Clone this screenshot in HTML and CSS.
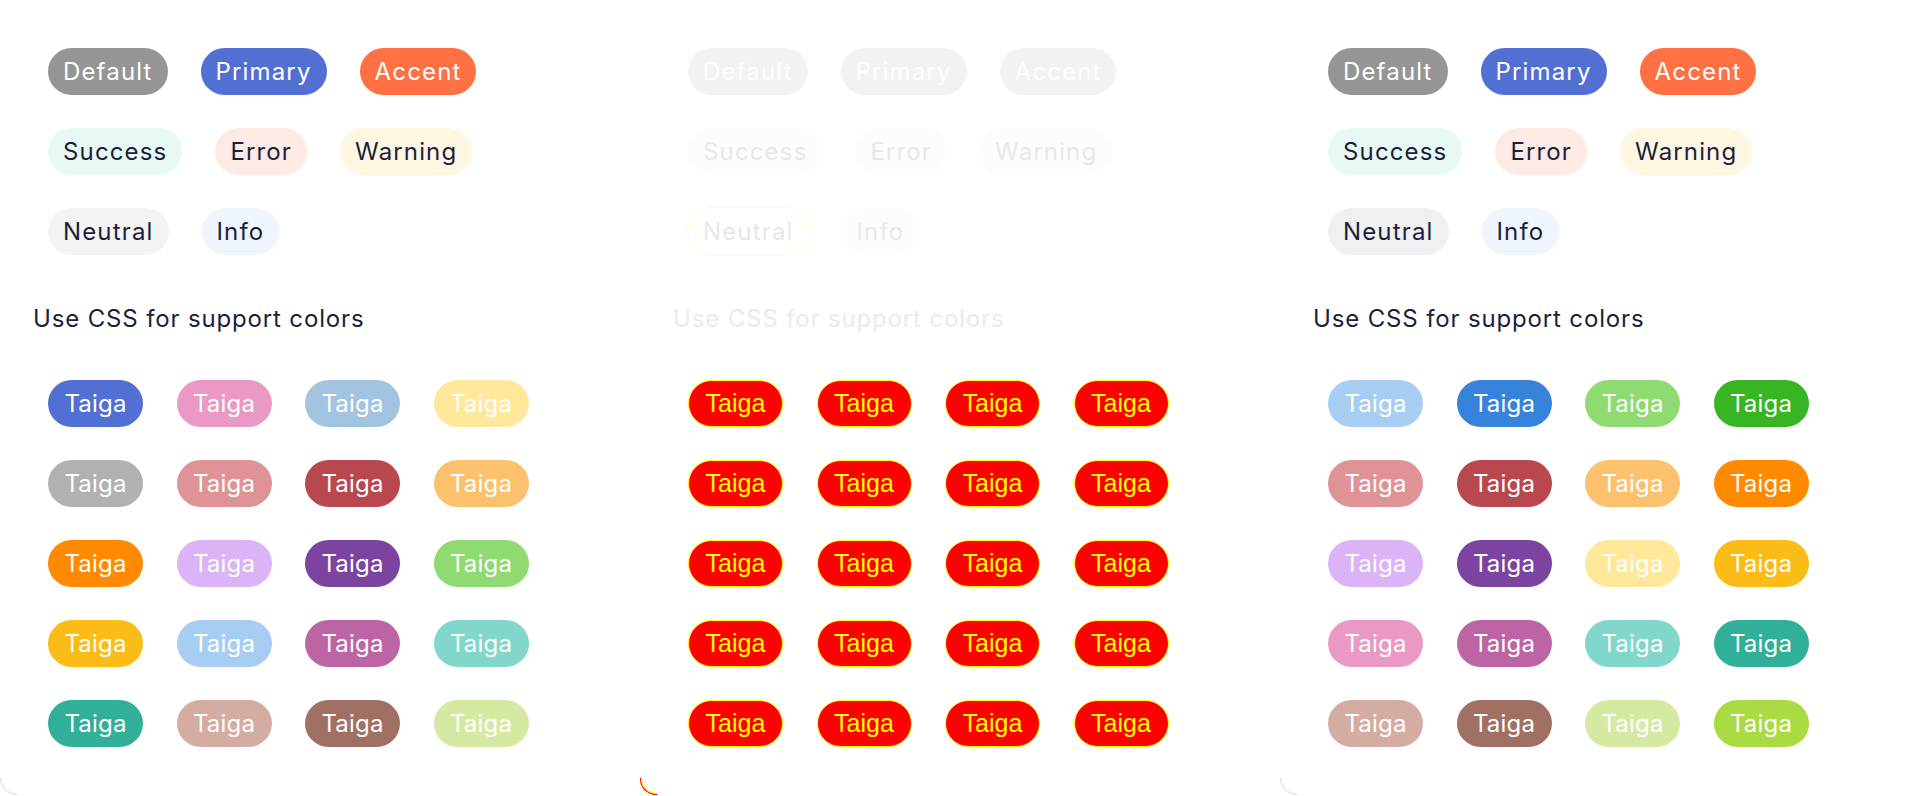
FILE: index.html
```html
<!DOCTYPE html>
<html lang="en">
<head>
<meta charset="utf-8">
<title>Tags</title>
<link rel="stylesheet" href="styles.css">
</head>
<body>
<main class="panels">
  <section class="panel">
    <div class="stack">
      <div class="row">
        <span class="chip c-default">Default</span>
        <span class="chip c-primary">Primary</span>
        <span class="chip c-accent">Accent</span>
      </div>
      <div class="row">
        <span class="chip c-success">Success</span>
        <span class="chip c-error">Error</span>
        <span class="chip c-warning">Warning</span>
      </div>
      <div class="row">
        <span class="chip c-neutral">Neutral</span>
        <span class="chip c-info">Info</span>
      </div>
    </div>
    <h2 class="heading">Use CSS for support colors</h2>
    <div class="grid">
      <span class="chip t-blue">Taiga</span>
      <span class="chip t-pink">Taiga</span>
      <span class="chip t-steel">Taiga</span>
      <span class="chip t-yellow-l">Taiga</span>
      <span class="chip t-grey">Taiga</span>
      <span class="chip t-rose">Taiga</span>
      <span class="chip t-red">Taiga</span>
      <span class="chip t-orange-l">Taiga</span>
      <span class="chip t-orange">Taiga</span>
      <span class="chip t-lavender">Taiga</span>
      <span class="chip t-purple">Taiga</span>
      <span class="chip t-green-l">Taiga</span>
      <span class="chip t-amber">Taiga</span>
      <span class="chip t-sky">Taiga</span>
      <span class="chip t-orchid">Taiga</span>
      <span class="chip t-teal-l">Taiga</span>
      <span class="chip t-teal">Taiga</span>
      <span class="chip t-tan">Taiga</span>
      <span class="chip t-brown">Taiga</span>
      <span class="chip t-lime-l">Taiga</span>
    </div>
  </section>

  <section class="panel panel-hc">
    <div class="stack">
      <div class="row">
        <span class="chip h-solid">Default</span>
        <span class="chip h-solid">Primary</span>
        <span class="chip h-solid">Accent</span>
      </div>
      <div class="row">
        <span class="chip h-soft">Success</span>
        <span class="chip h-soft">Error</span>
        <span class="chip h-soft">Warning</span>
      </div>
      <div class="row">
        <span class="chip h-soft h-focus">Neutral</span>
        <span class="chip h-soft">Info</span>
      </div>
    </div>
    <h2 class="heading heading-hc">Use CSS for support colors</h2>
    <div class="grid">
      <span class="chip h-red">Taiga</span>
      <span class="chip h-red">Taiga</span>
      <span class="chip h-red">Taiga</span>
      <span class="chip h-red">Taiga</span>
      <span class="chip h-red">Taiga</span>
      <span class="chip h-red">Taiga</span>
      <span class="chip h-red">Taiga</span>
      <span class="chip h-red">Taiga</span>
      <span class="chip h-red">Taiga</span>
      <span class="chip h-red">Taiga</span>
      <span class="chip h-red">Taiga</span>
      <span class="chip h-red">Taiga</span>
      <span class="chip h-red">Taiga</span>
      <span class="chip h-red">Taiga</span>
      <span class="chip h-red">Taiga</span>
      <span class="chip h-red">Taiga</span>
      <span class="chip h-red">Taiga</span>
      <span class="chip h-red">Taiga</span>
      <span class="chip h-red">Taiga</span>
      <span class="chip h-red">Taiga</span>
    </div>
  </section>

  <section class="panel">
    <div class="stack">
      <div class="row">
        <span class="chip c-default">Default</span>
        <span class="chip c-primary">Primary</span>
        <span class="chip c-accent">Accent</span>
      </div>
      <div class="row">
        <span class="chip c-success">Success</span>
        <span class="chip c-error">Error</span>
        <span class="chip c-warning">Warning</span>
      </div>
      <div class="row">
        <span class="chip c-neutral2">Neutral</span>
        <span class="chip c-info">Info</span>
      </div>
    </div>
    <h2 class="heading">Use CSS for support colors</h2>
    <div class="grid">
      <span class="chip t-sky">Taiga</span>
      <span class="chip t-blue2">Taiga</span>
      <span class="chip t-green-l">Taiga</span>
      <span class="chip t-green">Taiga</span>
      <span class="chip t-rose">Taiga</span>
      <span class="chip t-red">Taiga</span>
      <span class="chip t-orange-l">Taiga</span>
      <span class="chip t-orange">Taiga</span>
      <span class="chip t-lavender">Taiga</span>
      <span class="chip t-purple">Taiga</span>
      <span class="chip t-yellow-l">Taiga</span>
      <span class="chip t-amber">Taiga</span>
      <span class="chip t-pink">Taiga</span>
      <span class="chip t-orchid">Taiga</span>
      <span class="chip t-teal-l">Taiga</span>
      <span class="chip t-teal">Taiga</span>
      <span class="chip t-tan">Taiga</span>
      <span class="chip t-brown">Taiga</span>
      <span class="chip t-lime-l">Taiga</span>
      <span class="chip t-lime">Taiga</span>
    </div>
  </section>
</main>
</body>
</html>
```

FILE: styles.css
```css
* { box-sizing: border-box; }

html, body {
  margin: 0;
  padding: 0;
  background: #ffffff;
  overflow: hidden;
}

body {
  font-family: "Inter", "Noto Sans", sans-serif;
  color: #1b1f3b;
}

.panels {
  display: flex;
  width: 1920px;
  height: 796px;
}

.panel {
  width: 640px;
  height: 796px;
  padding: 48px 0 0 33px;
  background: #ffffff;
  position: relative;
}

/* rounded bottom-left corner of each card */
.panel::after {
  content: "";
  position: absolute;
  left: 0;
  bottom: 1px;
  width: 16px;
  height: 16px;
  border-left: 2px solid #ececec;
  border-bottom: 2px solid #ececec;
  border-bottom-left-radius: 16px;
}

.panel-hc::after {
  border-left: 1px solid #ff0000;
  border-bottom: 1px solid #ff0000;
  box-shadow: inset 1px -1px 0 #ffff00;
}

.stack {
  display: flex;
  flex-direction: column;
  gap: 33px;
  padding-left: 15px;
}

.row {
  display: flex;
  gap: 33px;
}

.chip {
  display: inline-flex;
  align-items: center;
  justify-content: center;
  height: 47px;
  padding: 0 15px;
  border-radius: 24px;
  font-size: 24px;
  line-height: 1;
  white-space: nowrap;
  letter-spacing: 1.15px;
}

.heading {
  margin: 46px 0 43px;
  font-size: 24px;
  line-height: 36px;
  font-weight: 400;
  color: #1b1f3b;
  letter-spacing: 0.85px;
}

.heading-hc { color: #ebebeb; }

.grid {
  display: grid;
  grid-template-columns: repeat(4, 95px);
  gap: 33px 33.5px;
  padding-left: 15px;
}

.grid .chip {
  color: #ffffff;
  letter-spacing: 0.2px;
}

/* status chips */
.c-default { background: #959595; color: #ffffff; }
.c-primary { background: #526fd3; color: #ffffff; }
.c-accent { background: #ff7043; color: #ffffff; }
.c-success { background: #e8f8f2; color: #1b1f3b; }
.c-error { background: #fde9e5; color: #1b1f3b; }
.c-warning { background: #fff7e1; color: #1b1f3b; }
.c-neutral { background: #f3f3f4; color: #1b1f3b; }
.c-neutral2 { background: #eff0f2; color: #1b1f3b; }
.c-info { background: #eef5fe; color: #1b1f3b; }

/* support colours */
.t-blue { background: #526fd3; }
.t-blue2 { background: #3783db; }
.t-pink { background: #e999c3; }
.t-steel { background: #a2c4e0; }
.t-yellow-l { background: #ffe899; }
.t-grey { background: #b1b1b1; }
.t-rose { background: #e09396; }
.t-red { background: #b8474e; }
.t-orange-l { background: #fcc16d; }
.t-orange { background: #ff8a00; }
.t-lavender { background: #dbb3f7; }
.t-purple { background: #7c44a0; }
.t-green-l { background: #8fdb71; }
.t-green { background: #38b523; }
.t-amber { background: #fcbc18; }
.t-sky { background: #a8cdf3; }
.t-orchid { background: #bd65a4; }
.t-teal-l { background: #81d8ca; }
.t-teal { background: #30af99; }
.t-tan { background: #d4aca1; }
.t-brown { background: #a07063; }
.t-lime-l { background: #d5e9a3; }
.t-lime { background: #abdb42; }

/* forced-colour preview */
.h-solid { background: #f2f2f2; color: #fdfdfd; }
.h-soft { background: #fcfcfc; color: #e8e8e8; }
.h-focus {
  background: transparent;
  outline: 1px dotted rgba(255, 255, 0, 0.55);
}

.grid .h-red {
  background: #ff0000;
  color: #ffff00;
  border: 1px solid #ffff00;
  font-family: "Liberation Sans", Arial, sans-serif;
  font-size: 25px;
  letter-spacing: 0;
}
```
